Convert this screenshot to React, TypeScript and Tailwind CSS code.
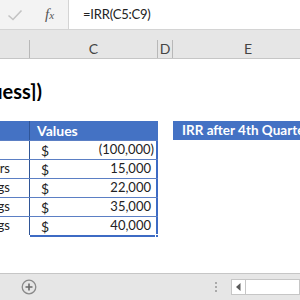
const rows = [
  { label: "", value: "(100,000)", neg: true },
  { label: "ars", value: "15,000", neg: false },
  { label: "ngs", value: "22,000", neg: false },
  { label: "ngs", value: "35,000", neg: false },
  { label: "ngs", value: "40,000", neg: false },
];

const font = "font-['Lato','Liberation_Sans',sans-serif]";

export default function App() {
  return (
    <div className={`w-[300px] h-[300px] overflow-hidden bg-white flex flex-col ${font}`}>
      {/* formula bar */}
      <div className="h-[30px] shrink-0 flex bg-[#f3f3f3] border-b border-[#d4d4d4]">
        <div className="w-[68px] shrink-0 flex items-center">
          <svg width="16" height="12" viewBox="0 0 16 12" className="ml-[7px]">
            <path d="M1.5 6.5 L6 10.5 L14.5 1.5" fill="none" stroke="#c3c3c3" strokeWidth="1.6" />
          </svg>
          <span className="ml-[22px] text-[15px] italic text-[#555] font-['Liberation_Serif',serif] leading-none">
            f<span className="text-[11px]">x</span>
          </span>
        </div>
        <div className="flex-1 min-w-0 bg-white border-l border-[#d4d4d4] flex items-center pl-[14px] text-[13px] tracking-[-0.2px] text-[#222]">
          =IRR(C5:C9)
        </div>
      </div>

      {/* column headers */}
      <div className="h-[29px] shrink-0 bg-[#e6e6e6] border-b border-[#c6c6c6] flex flex-col">
        <div className="h-[10px]" />
        <div className="flex-1 flex text-[14px] text-[#444] leading-none">
          <div className="w-[30px] shrink-0 border-r border-[#b8b8b8]" />
          <div className="w-[128px] shrink-0 border-r border-[#b8b8b8] flex items-center justify-center">C</div>
          <div className="w-[15px] shrink-0 border-r border-[#b8b8b8] flex items-center justify-center">D</div>
          <div className="flex-1 min-w-0 flex items-center pl-[71px]">E</div>
        </div>
      </div>

      {/* sheet */}
      <div className="flex-1 min-h-0 flex flex-col">
        <div className="h-[62px] shrink-0 flex items-start">
          <div className="w-[50px] overflow-hidden flex justify-end pr-[8px] pt-[22px]">
            <span className="whitespace-nowrap text-[20px] font-bold text-black leading-none">
              [guess])
            </span>
          </div>
        </div>

        <div className="flex">
          <div className="w-[158px] shrink-0 flex flex-col">
            <div className="h-[19px] bg-[#4472c4] flex text-white font-bold text-[14px]">
              <div className="w-[30px] border-r border-[#2f5597]" />
              <div className="flex-1 flex items-center pl-[7px]">Values</div>
            </div>
            <div className="relative">
              {rows.map((r, i) => (
                <div key={i} className="h-[19px] flex border-t border-[#5b7fc4] text-[13px] text-[#222]">
                  <div className="w-[30px] shrink-0 border-r border-[#2f5597] overflow-hidden flex justify-end items-center pr-[19px]">
                    <span className="whitespace-nowrap">{r.label}</span>
                  </div>
                  <div className="flex-1 flex items-center justify-between pl-[11px] border-r-2 border-[#3d6bc4]">
                    <span className="text-[14px]">$</span>
                    <span className={r.neg ? "pr-[2px]" : "pr-[5px]"}>{r.value}</span>
                  </div>
                </div>
              ))}
              <div className="h-0 border-t-2 border-[#3d6bc4] ml-[30px]" />
              <div className="absolute right-[-1px] bottom-[-1px] w-[4px] h-[4px] bg-[#3d6bc4] border border-white" />
            </div>
          </div>
          <div className="w-[15px] shrink-0" />
          <div className="flex-1 min-w-0">
            <div className="h-[19px] bg-[#4472c4] flex items-center pl-[9px] text-white font-bold text-[13.5px] whitespace-nowrap overflow-hidden">
              IRR after 4th Quarter
            </div>
          </div>
        </div>
      </div>

      {/* sheet tabs bar */}
      <div className="h-[27px] shrink-0 bg-[#e6e6e6] border-t border-[#c6c6c6] flex items-center">
        <svg width="16" height="16" viewBox="0 0 16 16" className="ml-[21px]">
          <circle cx="8" cy="8" r="6.8" fill="none" stroke="#8a8a8a" strokeWidth="1.3" />
          <path d="M8 4.5 V11.5 M4.5 8 H11.5" stroke="#6a6a6a" strokeWidth="1.6" />
        </svg>
        <div className="ml-[178px] flex flex-col gap-[2px]">
          <span className="w-[2px] h-[2px] bg-[#aaa]" />
          <span className="w-[2px] h-[2px] bg-[#aaa]" />
          <span className="w-[2px] h-[2px] bg-[#aaa]" />
        </div>
        <div className="ml-[14px] flex-1 h-[16px] bg-white border border-[#c6c6c6] flex">
          <div className="w-[14px] border-r border-[#c6c6c6] flex items-center justify-center">
            <svg width="5" height="8" viewBox="0 0 5 8">
              <path d="M4.5 0 L0 4 L4.5 8 Z" fill="#5a5a5a" />
            </svg>
          </div>
        </div>
      </div>
    </div>
  );
}
